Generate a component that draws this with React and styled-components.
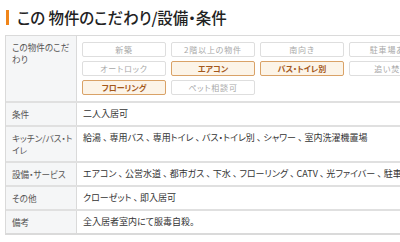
import styled, { createGlobalStyle } from "styled-components"

const GlobalStyle = createGlobalStyle`
    html, body {
        margin: 0;
        padding: 0;
        background: #fff;
        overflow: hidden;
    }
    body {
        font-family: "Noto Sans CJK JP", "Noto Sans", sans-serif;
        font-feature-settings: "palt";
    }
`

const features = [
    {label: "新築"},
    {label: "2階以上の物件"},
    {label: "南向き"},
    {label: "駐車場あり"},
    {label: "オートロック"},
    {label: "エアコン", active: true},
    {label: "バス・トイレ別", active: true},
    {label: "追い焚き"},
    {label: "フローリング", active: true},
    {label: "ペット相談可"},
]

const rows = [
    {head: "条件", body: "二人入居可"},
    {head: "キッチン/バス・トイレ", body: "給湯 、 専用バス 、 専用トイレ 、 バス・トイレ別 、 シャワー 、 室内洗濯機置場"},
    {head: "設備・サービス", body: "エアコン 、 公営水道 、 都市ガス 、 下水 、 フローリング 、 CATV 、 光ファイバー 、 駐車場"},
    {head: "その他", body: "クローゼット 、 即入居可"},
    {head: "備考", body: "全入居者室内にて服毒自殺。"},
]

function App() {
    return (
        <Page>
            <GlobalStyle />
            <Title>この 物件のこだわり/設備・条件</Title>
            <Table>
                <Row>
                    <Head>この物件のこだわり</Head>
                    <Cell>
                        <ChipGrid>
                            {features.map(f => (
                                <Chip key={f.label} $active={f.active}>{f.label}</Chip>
                            ))}
                        </ChipGrid>
                    </Cell>
                </Row>
                {rows.map(r => (
                    <Row key={r.head}>
                        <Head>{r.head}</Head>
                        <Cell>{r.body}</Cell>
                    </Row>
                ))}
            </Table>
        </Page>
    )
}

export default App

const Page = styled.div`
    width: 560px;
    padding: 10px 0 0 5px;
`
const Title = styled.h2`
    margin: 0 0 10px 1px;
    padding-left: 8px;
    border-left: 3px solid #f08519;
    font-size: 15.5px;
    line-height: 15px;
    font-weight: 500;
    color: #222;
    letter-spacing: -0.1px;
`
const Table = styled.div`
    border: 1px solid #dadada;
    border-bottom-width: 2px;
`
const Row = styled.div`
    display: grid;
    grid-template-columns: 71px 1fr;
    & + & {
        border-top: 2px solid #e0e0e0;
    }
`
const Head = styled.div`
    background: #f5f6f7;
    border-right: 1px solid #dadada;
    color: #555;
    font-size: 8.6px;
    line-height: 12px;
    padding: 5px 3px 5px 6px;
    word-break: break-all;
`
const Cell = styled.div`
    padding: 5px 6px;
    font-size: 9px;
    line-height: 12px;
    color: #333;
    white-space: nowrap;
    display: flex;
    align-items: flex-start;
`
const ChipGrid = styled.div`
    display: grid;
    grid-template-columns: repeat(4, 84px);
    column-gap: 5px;
    row-gap: 4px;
    padding: 1px 0 1px;
    margin-left: -1px;
`
const Chip = styled.div`
    box-sizing: border-box;
    height: 15px;
    display: flex;
    align-items: center;
    justify-content: center;
    border-radius: 2px;
    font-size: 8px;
    letter-spacing: ${p => p.$active ? "0" : "0.8px"};
    border: ${p => p.$active ? "1.5px solid #d9a267" : "1px solid #dedede"};
    background: ${p => p.$active ? "#fcf4e8" : "#fff"};
    color: ${p => p.$active ? "#a4581b" : "#a8a8a8"};
    font-weight: ${p => p.$active ? 700 : 400};
`
